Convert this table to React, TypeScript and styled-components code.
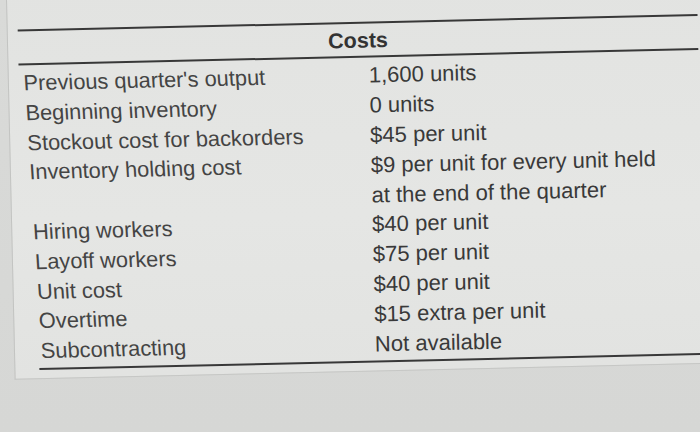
import React from "react";
import styled, { createGlobalStyle } from "styled-components";

const GlobalStyle = createGlobalStyle`
  html, body {
    margin: 0;
    padding: 0;
    background: #d8d9d7;
  }
`;

const Frame = styled.div`
  width: 700px;
  height: 432px;
  overflow: hidden;
  background: linear-gradient(180deg, #d9dad8 0%, #d6d7d5 100%);
`;

const Scene = styled.div`
  width: 700px;
  height: 452px;
  transform: translateY(-20px) rotate(-1.3deg);
  transform-origin: 350px 236px;
`;

const Sheet = styled.div`
  margin-left: 11px;
  width: 701px;
  padding: 42px 10px 8px 10px;
  box-sizing: border-box;
  background: linear-gradient(180deg, #e2e3e1 0%, #e5e6e4 60%, #e2e3e1 100%);
  border-left: 1px solid #c3c4c2;
  border-bottom: 1px solid #c6c7c5;
  font-family: "Liberation Sans", Arial, sans-serif;
  color: #3c3c3c;
`;

const Rule = styled.div<{ $weight: number; $inset?: number }>`
  height: ${(p) => p.$weight}px;
  margin-left: ${(p) => p.$inset ?? 0}px;
  background: #383838;
`;

const Header = styled.div`
  padding-top: 3px;
  height: 29px;
  line-height: 29px;
  font-size: 21.5px;
  font-weight: 700;
  text-align: center;
  color: #333;
`;

const Body = styled.div`
  display: grid;
  grid-template-columns: 350px 1fr;
  padding-top: 3.4px;
  margin-bottom: 2.1px;
`;

const Column = styled.div<{ $slant?: boolean }>`
  display: flex;
  flex-direction: column;
  padding-left: ${(p) => (p.$slant ? "4px" : "0")};
  transform: ${(p) => (p.$slant ? "skewX(2.4deg)" : "none")};
  transform-origin: 0 0;
`;

const Line = styled.div<{ $muted?: boolean }>`
  height: 29.8px;
  line-height: 29.8px;
  font-size: ${(p) => (p.$muted ? "21.8px" : "22px")};
  white-space: nowrap;
  color: ${(p) => (p.$muted ? "#444444" : "#393939")};
`;

const labels = [
  "Previous quarter's output",
  "Beginning inventory",
  "Stockout cost for backorders",
  "Inventory holding cost",
  "",
  "Hiring workers",
  "Layoff workers",
  "Unit cost",
  "Overtime",
  "Subcontracting",
];

const values = [
  "1,600 units",
  "0 units",
  "$45 per unit",
  "$9 per unit for every unit held",
  "at the end of the quarter",
  "$40 per unit",
  "$75 per unit",
  "$40 per unit",
  "$15 extra per unit",
  "Not available",
];

export default function App() {
  return (
    <>
      <GlobalStyle />
      <Frame>
        <Scene>
          <Sheet>
            <Rule $weight={1.5} />
            <Header>Costs</Header>
            <Rule $weight={2.5} />
            <Body>
              <Column $slant>
                {labels.map((l, i) => (
                  <Line key={i} $muted>
                    {l || "\u00a0"}
                  </Line>
                ))}
              </Column>
              <Column>
                {values.map((v, i) => (
                  <Line key={i}>{v}</Line>
                ))}
              </Column>
            </Body>
            <Rule $weight={1.5} $inset={14} />
          </Sheet>
        </Scene>
      </Frame>
    </>
  );
}
